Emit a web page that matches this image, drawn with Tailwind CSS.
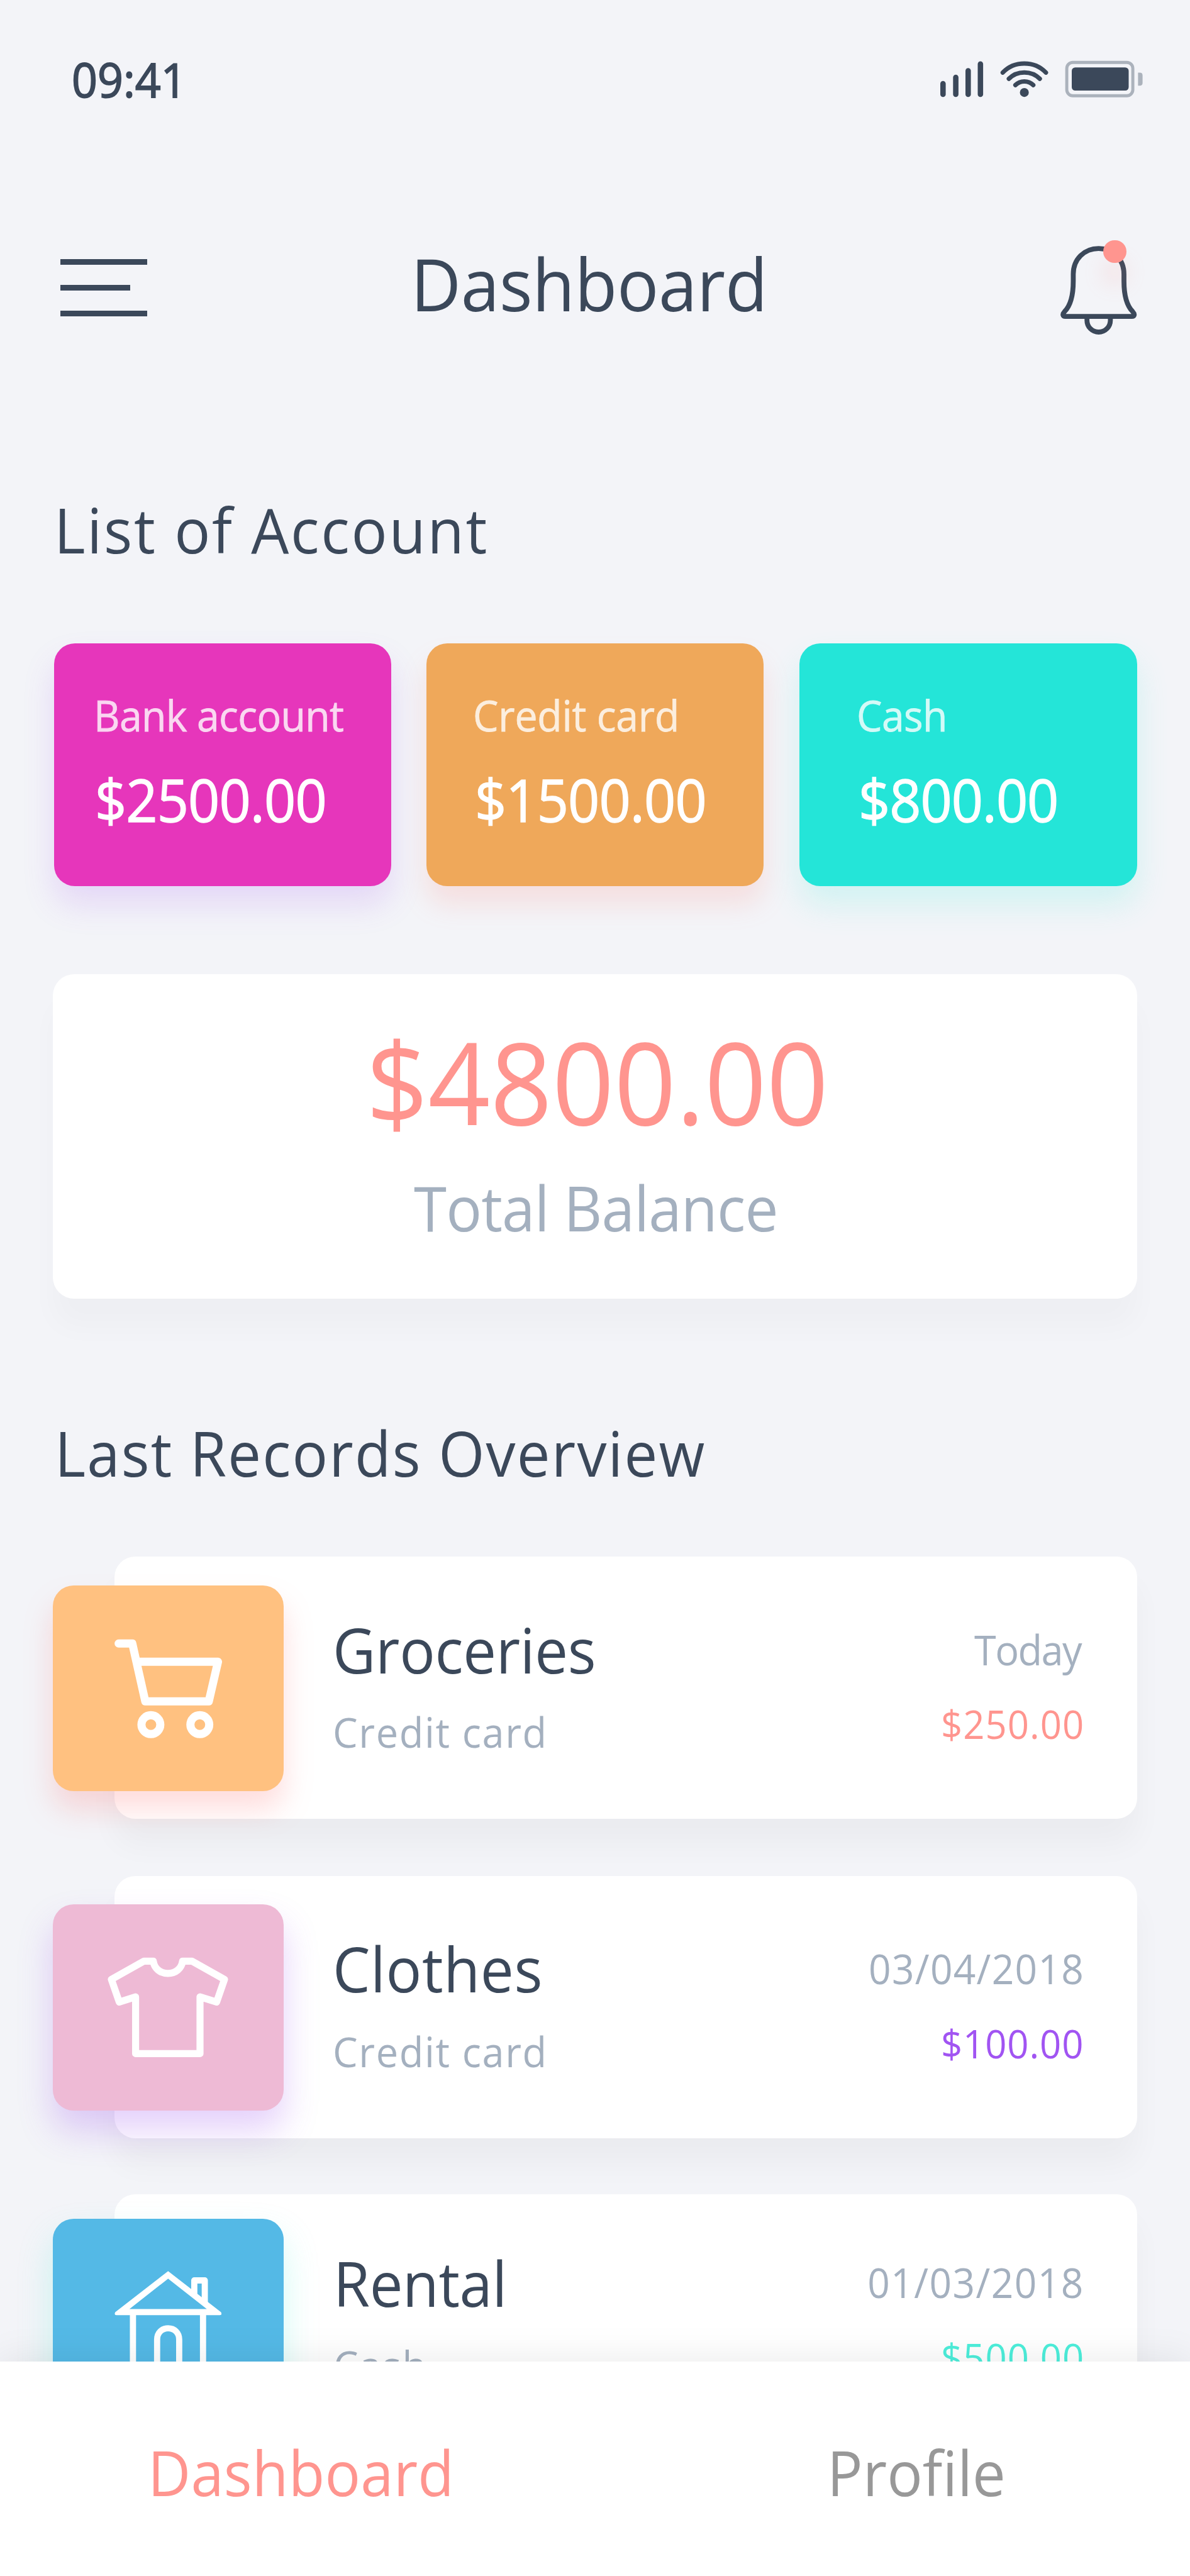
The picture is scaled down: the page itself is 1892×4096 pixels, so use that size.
<!DOCTYPE html>
<html lang="en">
<head>
<meta charset="utf-8">
<title>Dashboard</title>
<script src="https://cdn.jsdelivr.net/npm/@tailwindcss/browser@4"></script>
</head>
<body class="bg-[#f3f4f8]">
<div class="relative flex h-[4096px] w-[1892px] flex-col overflow-hidden bg-[#f3f4f8] font-['Open_Sans','Noto_Sans',sans-serif] text-[#3b485a]">

  <!-- Status bar -->
  <div class="flex h-[200px] shrink-0 items-start justify-between pt-[88px] pr-[75px] pl-[114px]">
    <span class="mt-px origin-left scale-x-[0.955] text-[75px] leading-none [-webkit-text-stroke:1.8px_#3b485a]">09:41</span>
    <svg class="mt-[8px] h-[60px] w-[322px]" viewBox="0 0 322 60" fill="none">
      <g fill="#3b485a">
        <rect x="0" y="32.8" width="8.6" height="25.4" rx="4.3"/>
        <rect x="20.3" y="22.8" width="8.6" height="35.4" rx="4.3"/>
        <rect x="40" y="12.2" width="8.6" height="46" rx="4.3"/>
        <rect x="59.5" y="1.6" width="8.6" height="56.6" rx="4.3"/>
        <circle cx="133.6" cy="51.1" r="7.1"/>
        <rect x="209" y="11.2" width="90.5" height="36.8" rx="5.5"/>
      </g>
      <g stroke="#3b485a" stroke-width="7" stroke-linecap="round">
        <path d="M99.3 19.4 C117.5 .2 149.7 .2 167.9 19.4"/>
        <path d="M109 29.3 C122 15.8 145.2 15.8 158.2 29.3"/>
        <path d="M119.4 39.3 C127 31.4 140.2 31.4 147.8 39.3"/>
      </g>
      <rect x="201.1" y="3.2" width="105" height="53" rx="9.5" stroke="#abb2bc" stroke-width="4.9"/>
      <path d="M314.4 19.6 h2.8 q4.4 0 4.4 4.4 v11.8 q0 4.4 -4.4 4.4 h-2.8z" fill="#abb2bc"/>
    </svg>
  </div>

  <!-- Header -->
  <header class="mt-[181px] flex h-[152px] shrink-0 items-start pr-[82px] pl-[96px]">
    <div class="mt-[31px] flex w-[138px] flex-col gap-[32.3px]">
      <div class="h-[8.8px] w-full bg-[#3b485a]"></div>
      <div class="h-[8.8px] w-[110.5px] bg-[#3b485a]"></div>
      <div class="h-[8.8px] w-full bg-[#3b485a]"></div>
    </div>
    <h1 class="mt-[12px] ml-[418.5px] origin-left scale-x-[0.96] text-[115px] leading-none tracking-[-0.29px]">Dashboard</h1>
    <div class="relative ml-auto h-[152px] w-[124px]">
      <svg class="h-[152px] w-[124px]" viewBox="0 0 124 152" fill="none" stroke="#3b485a" stroke-width="7.8" stroke-linejoin="round">
        <path d="M60.7 14.2 C38 14.2 20.4 31 20.4 55 V66 C20.4 90 16 105 6.5 114.6 C2.6 118.8 3.6 122.2 8 122.2 H113.4 C117.8 122.2 118.8 118.8 114.9 114.6 C105.4 105 101 90 101 66 V55 C101 31 83.4 14.2 60.7 14.2Z"/>
        <path d="M42.2 123 V128.4 a18.6 18.6 0 0 0 37.2 0 V123"/>
      </svg>
      <div class="absolute top-[0.6px] left-[68px] size-[36.8px] rounded-full bg-[#ff958f] shadow-[0_33px_34px_rgba(255,149,143,0.2)]"></div>
    </div>
  </header>

  <!-- Accounts -->
  <h2 class="mt-[259px] ml-[85.5px] shrink-0 origin-left scale-x-[0.955] text-[99.5px] leading-[100px] tracking-[2.87px]">List of Account</h2>
  <div class="mt-[130.5px] ml-[85.7px] flex shrink-0">
    <div class="h-[386.6px] w-[536.7px] rounded-[33px] bg-[#e636bb] pt-[80.5px] pl-[63.6px] shadow-[0_29px_50px_rgba(159,80,245,0.17)]">
      <p class="origin-left scale-x-[0.945] text-[68px] leading-none tracking-[-0.65px] whitespace-nowrap text-[#fad7f1] [-webkit-text-stroke:0.8px_#fad7f1]">Bank account</p>
      <p class="mt-[54.3px] ml-[1.7px] origin-left scale-x-[0.945] text-[93px] leading-none tracking-[-0.93px] text-white [-webkit-text-stroke:1.4px_white]">$2500.00</p>
    </div>
    <div class="ml-[55.3px] h-[386.6px] w-[536.7px] rounded-[33px] bg-[#efa85a] pt-[80.5px] pl-[74px] shadow-[0_29px_40px_rgba(255,149,143,0.22)]">
      <p class="origin-left scale-x-[0.945] text-[68px] leading-none tracking-[-0.19px] whitespace-nowrap text-[#fceede] [-webkit-text-stroke:0.8px_#fceede]">Credit card</p>
      <p class="mt-[54.3px] ml-[3.4px] origin-left scale-x-[0.945] text-[93px] leading-none tracking-[-0.93px] text-white [-webkit-text-stroke:1.4px_white]">$1500.00</p>
    </div>
    <div class="ml-[57.1px] h-[386.6px] w-[536.7px] rounded-[33px] bg-[#24e5d8] pt-[80.5px] pl-[91px] shadow-[0_29px_50px_rgba(77,240,220,0.2)]">
      <p class="origin-left scale-x-[0.945] text-[68px] leading-none tracking-[-0.6px] whitespace-nowrap text-[#d3faf7] [-webkit-text-stroke:0.8px_#d3faf7]">Cash</p>
      <p class="mt-[54.3px] ml-[2.8px] origin-left scale-x-[0.945] text-[93px] leading-none tracking-[-1.1px] text-white [-webkit-text-stroke:1.4px_white]">$800.00</p>
    </div>
  </div>

  <!-- Balance -->
  <div class="mt-[139.7px] ml-[84px] h-[515.9px] w-[1723.5px] shrink-0 rounded-[34px] bg-white pt-[80.6px] shadow-[0_46px_45px_rgba(0,0,0,0.025)]">
    <p class="ml-[497.9px] origin-left scale-x-[0.955] text-[181px] leading-none tracking-[-0.27px] text-[#ff958f]">$4800.00</p>
    <p class="mt-[60.3px] ml-[573.6px] origin-left scale-x-[0.96] text-[98.5px] leading-none tracking-[-0.92px] text-[#a4b0bf]">Total Balance</p>
  </div>

  <!-- Records -->
  <h2 class="mt-[196.1px] ml-[86.5px] shrink-0 origin-left scale-x-[0.955] text-[98.5px] leading-none tracking-[2.28px]">Last Records Overview</h2>
  <div class="mt-[115.9px] ml-[182px] flex w-[1626px] shrink-0 flex-col">

    <div class="flex h-[416.9px] items-start rounded-[33px] bg-white pr-[84px] shadow-[0_42px_48px_rgba(0,0,0,0.036)]">
      <div class="mt-[45.4px] -ml-[98px] h-[327.8px] w-[366.5px] shrink-0 rounded-[33px] bg-[#ffc180] shadow-[0_29px_46px_rgba(255,130,130,0.27)]">
        <svg class="h-full w-full" viewBox="0 0 366.5 327.8" fill="none" stroke="white" stroke-width="12.9" stroke-linecap="round" stroke-linejoin="round">
          <path d="M104.6 92.3 H126.4 L147 184.3 H248 L262.6 121.3 H134"/>
          <circle cx="155.9" cy="221.3" r="15"/><circle cx="233.7" cy="221.3" r="15"/>
        </svg>
      </div>
      <div class="ml-[78.7px] pt-[98.5px]">
        <p class="origin-left scale-x-[0.955] text-[98.5px] leading-none tracking-[-0.34px]">Groceries</p>
        <p class="mt-[48.1px] origin-left scale-x-[0.955] text-[66px] leading-none tracking-[1.72px] text-[#a4b0bf]">Credit card</p>
      </div>
      <div class="ml-auto flex flex-col items-end pt-[113.9px]">
        <p class="mr-[5px] origin-right scale-x-[0.955] text-[66px] leading-none tracking-[-1.63px] text-[#a4b0bf]">Today</p>
        <p class="mt-[54.4px] origin-right scale-x-[0.95] text-[63px] leading-none tracking-[1.07px] text-[#ff958f]">$250.00</p>
      </div>
    </div>

    <div class="mt-[90.7px] flex h-[416.9px] items-start rounded-[33px] bg-white pr-[84px] shadow-[0_42px_48px_rgba(0,0,0,0.036)]">
      <div class="mt-[45.4px] -ml-[98px] h-[327.8px] w-[366.5px] shrink-0 rounded-[33px] bg-[#eebad5] shadow-[0_32px_54px_rgba(150,70,240,0.25)]">
        <svg class="h-full w-full" viewBox="0 0 366.5 327.8" fill="none" stroke="white" stroke-width="11.2" stroke-linecap="round" stroke-linejoin="round">
          <path d="M144.7 90.4 H159.7 C161.5 102.5 171 109.9 183 109.9 C195 109.9 204.5 102.5 206.3 90.4 H221.3 L272.9 119.4 L260.4 155.4 L234 147.2 V237.4 H131.6 V147.2 L105.6 155.4 L93.1 119.4 Z"/>
        </svg>
      </div>
      <div class="ml-[78.7px] pt-[98.5px]">
        <p class="origin-left scale-x-[0.96] text-[98.5px] leading-none tracking-[0.58px]">Clothes</p>
        <p class="mt-[48.1px] origin-left scale-x-[0.955] text-[66px] leading-none tracking-[1.72px] text-[#a4b0bf]">Credit card</p>
      </div>
      <div class="ml-auto flex flex-col items-end pt-[114.2px]">
        <p class="mr-[0.3px] origin-right scale-x-[0.95] text-[65.5px] leading-none tracking-[1.35px] text-[#a4b0bf]">03/04/2018</p>
        <p class="mt-[54.6px] mr-[0.5px] origin-right scale-x-[0.95] text-[63px] leading-none tracking-[0.95px] text-[#a154f2]">$100.00</p>
      </div>
    </div>

    <div class="mt-[89.5px] flex h-[416.9px] items-start rounded-[33px] bg-white pr-[84px] shadow-[0_42px_48px_rgba(0,0,0,0.036)]">
      <div class="mt-[38.5px] -ml-[98px] h-[327.8px] w-[366.5px] shrink-0 rounded-[33px] bg-[#54b9e6] shadow-[0_29px_54px_rgba(77,240,220,0.25)]">
        <svg class="h-full w-full" viewBox="0 0 366.5 327.8" fill="none" stroke="white" stroke-width="9.8" stroke-linejoin="round">
          <path d="M224.9 121 V98 H241.6 V137"/>
          <path d="M127.4 150 V262 M238.8 150 V262"/>
          <path d="M165.8 262 V192 C165.8 181.5 173 174.2 183.3 174.2 C193.6 174.2 200.9 181.5 200.9 192 V262"/>
          <path fill="white" stroke="none" fill-rule="evenodd" d="M183.3 83.2 L267.4 148.6 Q269.6 153.3 265.5 153.3 H101.1 Q97 153.3 99.2 148.6 Z M183.3 95.2 L244.8 143.6 H121.8 Z"/>
        </svg>
      </div>
      <div class="ml-[79.2px] pt-[91.5px]">
        <p class="origin-left scale-x-[0.955] text-[98.5px] leading-none tracking-[-0.4px]">Rental</p>
        <p class="mt-[48.1px] origin-left scale-x-[0.955] text-[66px] leading-none tracking-[1.63px] text-[#a4b0bf]">Cash</p>
      </div>
      <div class="ml-auto flex flex-col items-end pt-[107.2px]">
        <p class="origin-right scale-x-[0.95] text-[65.5px] leading-none tracking-[1.5px] text-[#a4b0bf]">01/03/2018</p>
        <p class="mt-[54.6px] origin-right scale-x-[0.95] text-[63px] leading-none tracking-[1.07px] text-[#4defdb]">$500.00</p>
      </div>
    </div>
  </div>

  <!-- Bottom navigation, over the scrolled list -->
  <nav class="absolute bottom-0 left-0 flex h-[341.4px] w-full bg-white pt-[127.1px] shadow-[0_0_60px_rgba(0,0,0,0.09)]">
    <a class="ml-[234.7px] w-[1080.4px] origin-left scale-x-[0.955] text-[98.5px] leading-none tracking-[0.18px] text-[#ff958f]">Dashboard</a>
    <a class="origin-left scale-x-[0.955] text-[98.5px] leading-none tracking-[0.05px] text-[#989898]">Profile</a>
  </nav>
</div>
</body>
</html>
